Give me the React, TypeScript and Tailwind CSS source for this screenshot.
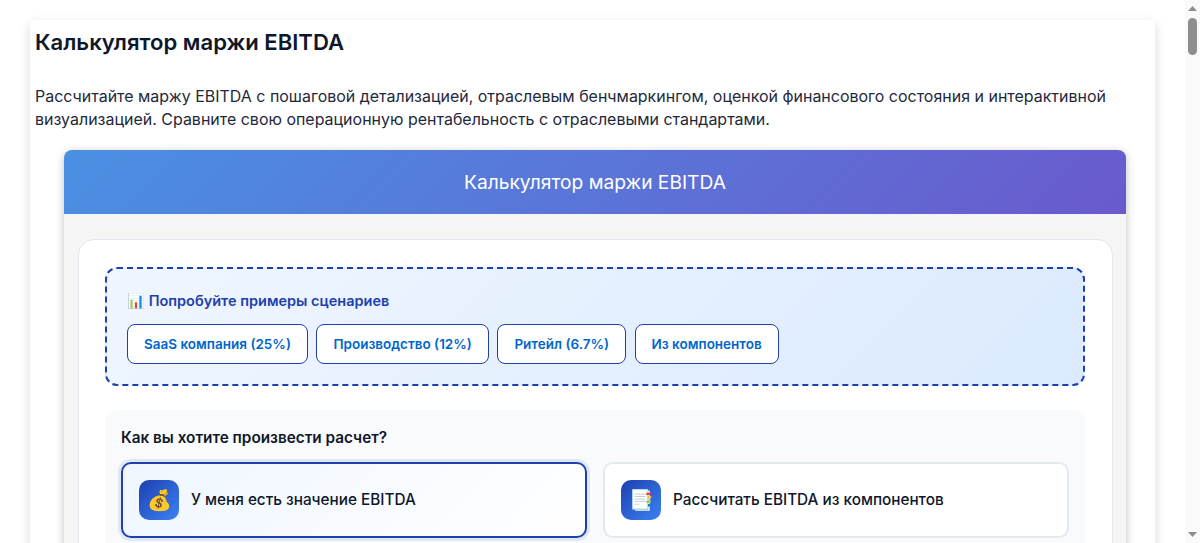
export default function App() {
  const scenarios = ["SaaS компания (25%)", "Производство (12%)", "Ритейл (6.7%)", "Из компонентов"];
  return (
    <div className="flex h-screen overflow-hidden bg-white font-['Inter','Noto_Sans',sans-serif]">
      <div className="min-w-0 flex-1 overflow-hidden px-[30px] pt-[20px]">
        <div className="min-h-[7300px] rounded-[4px] bg-white px-[5px] shadow-[0_4px_12px_rgba(0,0,0,0.15)]">
          <h1 className="pt-[6px] text-[22.1px] leading-[32px] font-semibold text-[#0f172a]">Калькулятор маржи EBITDA</h1>
          <p className="mt-[27px] text-[15.97px] leading-[23px] text-[#1e293b]">
            Рассчитайте маржу EBITDA с пошаговой детализацией, отраслевым бенчмаркингом, оценкой финансового состояния и интерактивной визуализацией. Сравните свою операционную рентабельность с отраслевыми стандартами.
          </p>
          <div className="mt-[19px] mr-[24px] ml-[29px] rounded-[8px] bg-[#f5f5f5] shadow-[0_2px_8px_rgba(0,0,0,0.25)]">
            <div className="flex h-[64px] items-center justify-center rounded-t-[8px] bg-[linear-gradient(135deg,#4a90e2,#6a5acd)] text-[19.2px] text-white">
              Калькулятор маржи EBITDA
            </div>
            <div className="pt-[25px] pr-[13px] pl-[14px]">
              <div className="rounded-[16px] border border-[#e2e8f0] bg-white pt-[27px] pr-[27px] pb-[40px] pl-[26px]">
                <div className="rounded-[12px] border-2 border-dashed border-[#1e40af] bg-[linear-gradient(135deg,#eff6ff,#dbeafe)] px-[20px] pt-[21px] pb-[20px]">
                  <div className="text-[14.5px] leading-[22px] font-semibold text-[#1e40af]">📊 Попробуйте примеры сценариев</div>
                  <div className="mt-[12px] flex gap-[8.5px]">
                    {scenarios.map((s) => (
                      <button key={s} className="h-[40px] rounded-[8px] border border-[#1e40af] bg-white px-[16px] text-[13.5px] font-semibold text-[#0066cc]">
                        {s}
                      </button>
                    ))}
                  </div>
                </div>
                <div className="mt-[24px] rounded-[12px] bg-[#f8fafc] px-[16px] pt-[16px] pb-[24px]">
                  <div className="text-[15.3px] leading-[24px] font-semibold text-[#0f172a]">Как вы хотите произвести расчет?</div>
                  <div className="mt-[12px] grid grid-cols-2 gap-[16px]">
                    <div className="flex h-[76px] items-center gap-[12px] rounded-[10px] border-2 border-[#1e40af] bg-[linear-gradient(135deg,#eff6ff,#ffffff)] px-[16px] shadow-[0_0_0_3px_rgba(30,64,175,0.1)]">
                      <span className="flex size-[40px] items-center justify-center rounded-[10px] bg-[linear-gradient(135deg,#1e40af,#3b82f6)] text-[20px]">💰</span>
                      <span className="text-[15.3px] font-medium text-[#0f172a]">У меня есть значение EBITDA</span>
                    </div>
                    <div className="flex h-[76px] items-center gap-[12px] rounded-[10px] border-2 border-[#e2e8f0] bg-white px-[16px]">
                      <span className="flex size-[40px] items-center justify-center rounded-[10px] bg-[linear-gradient(135deg,#1e40af,#3b82f6)] text-[20px]">📑</span>
                      <span className="text-[15.3px] font-medium text-[#0f172a]">Рассчитать EBITDA из компонентов</span>
                    </div>
                  </div>
                </div>
              </div>
            </div>
          </div>
        </div>
      </div>
      <div className="flex w-[15px] shrink-0 flex-col items-center bg-[#fafafa]">
        <svg width="9" height="5" viewBox="0 0 9 5" className="mt-[6px] shrink-0 fill-[#8e8e8e]"><path d="M4.5 0L9 5H0z" /></svg>
        <div className="mt-[7px] h-[37px] w-[9px] rounded-[5px] bg-[#8e8e8e]" />
        <svg width="9" height="5" viewBox="0 0 9 5" className="mt-auto mb-[6px] shrink-0 fill-[#8e8e8e]"><path d="M0 0H9L4.5 5z" /></svg>
      </div>
    </div>
  );
}
